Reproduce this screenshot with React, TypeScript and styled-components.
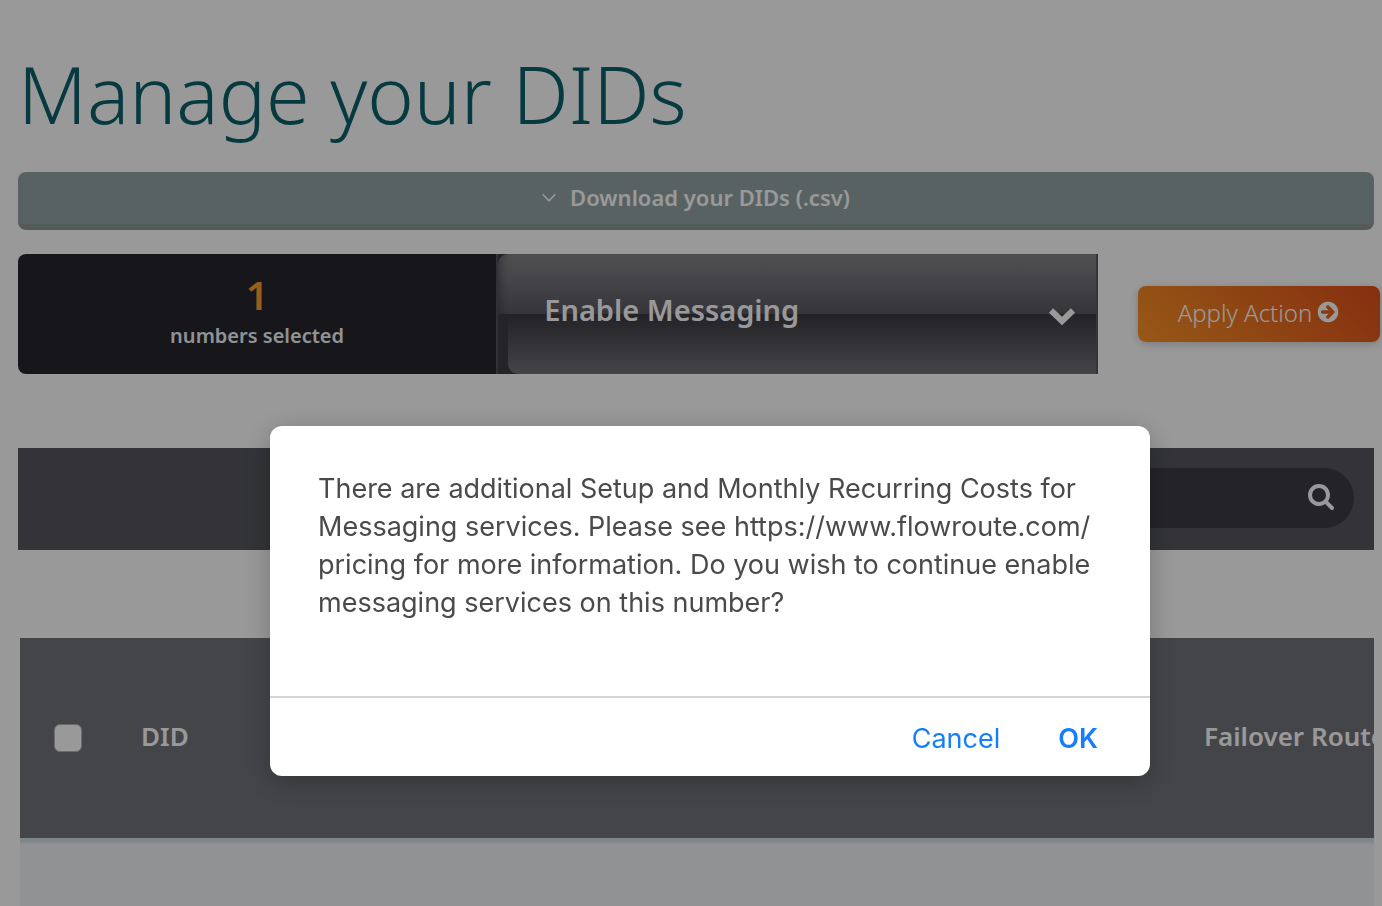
import React from "react";
import styled, { createGlobalStyle } from "styled-components";

const brand = '"Noto Sans", "Open Sans", sans-serif';
const system = 'Inter, "Liberation Sans", sans-serif';

const GlobalStyle = createGlobalStyle`
  *, *::before, *::after { box-sizing: border-box; }
  body {
    margin: 0;
    background: #ffffff;
    font-family: ${brand};
    overflow: hidden;
  }
  button, select, input { font-family: inherit; }
`;

const Page = styled.main`
  display: flex;
  flex-direction: column;
  min-height: 100vh;
  padding: 42px 8px 0 18px;
`;

const Title = styled.h1`
  margin: 0;
  font-size: 79px;
  line-height: 104px;
  font-weight: 300;
  color: #0d626b;
`;

const DownloadButton = styled.button`
  display: flex;
  align-items: center;
  justify-content: center;
  gap: 14px;
  height: 58px;
  margin-top: 26px;
  padding: 0 0 2px;
  border: 0;
  border-bottom: 6px solid #899797;
  border-radius: 8px;
  background: #95a4a4;
  color: #ffffff;
  font-size: 22px;
  line-height: 30px;
  font-weight: 600;
`;

const ActionRow = styled.section`
  display: flex;
  align-items: center;
  gap: 40px;
  margin: 24px -6px 0 0;
`;

const ActionGroup = styled.div`
  display: flex;
  flex: 1;
  height: 120px;
  border-right: 2px solid #57555f;
`;

const Selected = styled.div`
  display: flex;
  flex-direction: column;
  align-items: center;
  flex: 4;
  padding-top: 14px;
  border-radius: 8px 0 0 8px;
  background: #26252d;
  color: #eef5f5;
  font-size: 20px;
  line-height: 28px;
  font-weight: 600;
`;

const Count = styled.strong`
  font-size: 40px;
  line-height: 54px;
  font-weight: 600;
  color: #ff992f;
`;

const SelectBox = styled.div`
  position: relative;
  flex: 5;
  border-left: 2px solid #53515d;
  background: #3c3b45;

  &::before,
  &::after {
    content: "";
    position: absolute;
    right: 0;
  }
  &::before {
    top: 0;
    left: 0;
    height: 60px;
    border-radius: 10px 0 0 0;
    background: linear-gradient(#858587, #78777d 35%, #5a5960);
    box-shadow: inset 10px 0 10px -8px rgba(40, 38, 48, 0.5);
  }
  &::after {
    bottom: 0;
    left: 10px;
    height: 60px;
    border-radius: 0 0 0 10px;
    background: linear-gradient(#3c3a42, #504f55 40%, #747379);
  }
`;

const Select = styled.select`
  position: relative;
  z-index: 1;
  display: block;
  width: 100%;
  height: 100%;
  padding: 0 80px 10px 46px;
  border: 0;
  appearance: none;
  background: transparent;
  color: #ffffff;
  font-size: 29px;
  font-weight: 600;
`;

const SelectArrow = styled.svg`
  position: absolute;
  z-index: 2;
  right: 20px;
  top: 53px;
  pointer-events: none;
`;

const ApplyButton = styled.button`
  display: flex;
  align-items: center;
  justify-content: center;
  gap: 4px;
  width: 242px;
  height: 56px;
  padding: 0 0 4px;
  border: 0;
  border-radius: 8px;
  background: linear-gradient(45deg, #fb9426, #e04f1a);
  box-shadow: 0 2px 8px rgba(0, 0, 0, 0.2);
  color: #ffffff;
  font-size: 24px;
  font-weight: 300;
`;

const SearchBand = styled.form`
  margin-top: 74px;
  padding: 20px 20px 22px;
  background: #55565f;
`;

const SearchPill = styled.div`
  display: flex;
  align-items: center;
  width: 600px;
  height: 60px;
  margin-left: auto;
  padding: 0 20px 0 28px;
  border-radius: 30px;
  background: #3c3c44;
`;

const SearchInput = styled.input`
  flex: 1;
  border: 0;
  outline: 0;
  background: transparent;
  color: #ffffff;
  font-size: 22px;
`;

const SearchButton = styled.button`
  display: flex;
  padding: 0 0 3px;
  border: 0;
  background: transparent;
  color: #ffffff;
`;

const TableClip = styled.div`
  flex: 1;
  margin: 88px 0 0 2px;
  overflow: hidden;
  background: #f2f3f7;
`;

const Table = styled.table`
  width: calc(100% + 60px);
  table-layout: fixed;
  border-collapse: separate;
  border-spacing: 0;
  background: #71737b;
  box-shadow: 0 4px 0 #d3dfe3, 0 6px 0 #e5eaf0;
`;

const HeadCell = styled.th<{ $width?: number }>`
  width: ${(p) => (p.$width ? `${p.$width}px` : "auto")};
  height: 200px;
  padding: 0 20px 4px;
  text-align: left;
  white-space: nowrap;
  color: #ffffff;
  font-size: 26px;
  font-weight: 600;
`;

const CheckCell = styled(HeadCell)`
  padding: 0 0 0 34px;
`;

const Checkbox = styled.input`
  display: block;
  width: 28px;
  height: 28px;
  margin: 0;
  appearance: none;
  border: 1px solid #b4b4b8;
  border-radius: 6px;
  background: #ffffff;
`;

const Overlay = styled.div`
  position: fixed;
  inset: 0;
  z-index: 10;
  display: flex;
  align-items: flex-start;
  justify-content: center;
  padding: 426px 0 0 38px;
  background: rgba(0, 0, 0, 0.4);
`;

const Dialog = styled.div`
  width: 880px;
  border-radius: 12px;
  background: #ffffff;
  box-shadow: 0 6px 28px rgba(0, 0, 0, 0.24);
  font-family: ${system};
`;

const Message = styled.p`
  margin: 0;
  padding: 44px 0 74px 48px;
  color: #4a4a4a;
  font-size: 27px;
  line-height: 38px;
  white-space: pre-line;
`;

const DialogActions = styled.div`
  display: flex;
  align-items: center;
  justify-content: flex-end;
  gap: 58px;
  height: 80px;
  padding: 4px 52px 0 0;
  border-top: 2px solid #d6d6d6;
`;

const DialogButton = styled.button<{ $strong?: boolean }>`
  padding: 0;
  border: 0;
  background: transparent;
  color: #157efb;
  font-size: 27px;
  line-height: 38px;
  font-weight: ${(p) => (p.$strong ? 600 : 400)};
`;

const message = `There are additional Setup and Monthly Recurring Costs for
Messaging services. Please see https://www.flowroute.com/
pricing for more information. Do you wish to continue enable
messaging services on this number?`;

const ChevronThin = () => (
  <svg width="14" height="10" viewBox="0 0 14 10" fill="none" stroke="currentColor" strokeWidth="1.5" aria-hidden="true">
    <path d="M0.7 2.2 7 8.8 13.3 2.2" />
  </svg>
);

const ArrowCircle = () => (
  <svg width="24" height="24" viewBox="0 0 1792 1792" fill="currentColor" fillRule="evenodd" aria-hidden="true">
    <path d="M1413 896q0-27-18-45l-91-91-362-362q-18-18-45-18t-45 18l-91 91q-18 18-18 45t18 45l189 189h-502q-26 0-45 19t-19 45v128q0 26 19 45t45 19h502l-189 189q-18 18-18 45t18 45l91 91q18 18 45 18t45-18l362-362 91-91q18-18 18-45zm251 0q0 209-103 385.5t-279.5 279.5-385.5 103-385.5-103-279.5-279.5-103-385.5 103-385.5 279.5-279.5 385.5-103 385.5 103 279.5 279.5 103 385.5z" />
  </svg>
);

const SearchIcon = () => (
  <svg width="26" height="26" viewBox="0 128 1664 1664" fill="currentColor" fillRule="evenodd" aria-hidden="true">
    <path d="M1152 832q0-185-131.500-316.500t-316.500-131.500-316.500 131.500-131.500 316.500 131.500 316.500 316.500 131.500 316.500-131.500 131.500-316.500zm512 832q0 52-38 90t-90 38q-54 0-90-38l-343-342q-179 124-399 124-143 0-273.500-55.500t-225-150-150-225-55.500-273.500 55.500-273.500 150-225 225-150 273.500-55.500 273.500 55.500 225 150 150 225 55.500 273.500q0 220-124 399l343 343q37 37 37 90z" />
  </svg>
);

export default function App() {
  return (
    <>
      <GlobalStyle />
      <Page>
        <Title>Manage your DIDs</Title>
        <DownloadButton type="button">
          <ChevronThin />
          Download your DIDs (.csv)
        </DownloadButton>
        <ActionRow>
          <ActionGroup>
            <Selected>
              <Count>1</Count>
              numbers selected
            </Selected>
            <SelectBox>
              <Select aria-label="Action" defaultValue="messaging">
                <option value="messaging">Enable Messaging</option>
              </Select>
              <SelectArrow width="28" height="20" viewBox="0 0 28 20" fill="none" stroke="#ffffff" strokeWidth="6" aria-hidden="true">
                <path d="M3 3.500 14 14 25 3.500" />
              </SelectArrow>
            </SelectBox>
          </ActionGroup>
          <ApplyButton type="button">
            Apply Action
            <ArrowCircle />
          </ApplyButton>
        </ActionRow>
        <SearchBand>
          <SearchPill>
            <SearchInput type="search" aria-label="Search" />
            <SearchButton type="button" aria-label="Search numbers">
              <SearchIcon />
            </SearchButton>
          </SearchPill>
        </SearchBand>
        <TableClip>
          <Table>
            <thead>
              <tr>
                <CheckCell $width={101}>
                  <Checkbox type="checkbox" aria-label="Select all" />
                </CheckCell>
                <HeadCell>DID</HeadCell>
                <HeadCell $width={250}>Failover Route</HeadCell>
              </tr>
            </thead>
          </Table>
        </TableClip>
      </Page>
      <Overlay>
        <Dialog role="dialog" aria-modal="true" aria-describedby="dialog-message">
          <Message id="dialog-message">{message}</Message>
          <DialogActions>
            <DialogButton type="button">Cancel</DialogButton>
            <DialogButton type="button" $strong>
              OK
            </DialogButton>
          </DialogActions>
        </Dialog>
      </Overlay>
    </>
  );
}
